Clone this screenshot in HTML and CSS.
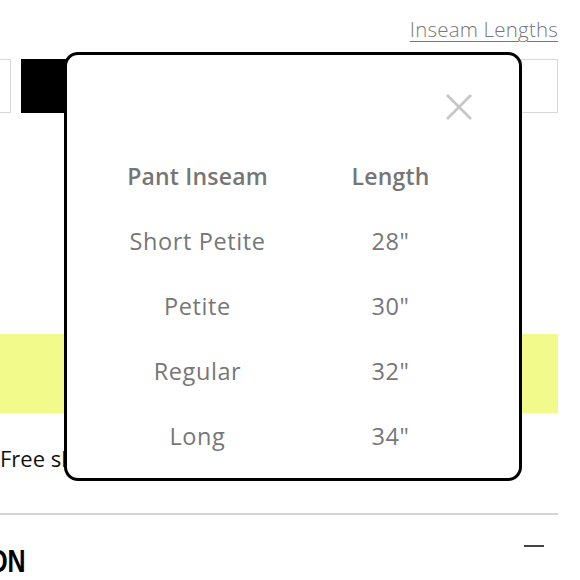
FILE: index.html
```html
<!DOCTYPE html>
<html lang="en">
<head>
<meta charset="utf-8">
<title>Inseam Lengths</title>
<link rel="stylesheet" href="styles.css">
</head>
<body>
<div class="page">
  <div class="top-row">
    <a class="inseam-link" href="#">Inseam Lengths</a>
  </div>
  <div class="sizes">
    <div class="size size-cut"></div>
    <div class="size size-active"></div>
    <div class="size"></div>
    <div class="size"></div>
    <div class="size"></div>
    <div class="size size-last"></div>
  </div>
  <div class="cta"></div>
  <p class="shipping">Free shipping on orders over $50</p>
  <div class="section-head">
    <h2 class="section-title">DESCRIPTION</h2>
    <span class="toggle"></span>
  </div>

  <div class="modal">
    <div class="modal-top">
      <button class="close" aria-label="Close">
        <svg width="26" height="26" viewBox="0 0 26 26"><path d="M1 1L25 25M25 1L1 25" stroke="#c6c6c6" stroke-width="2.6" fill="none"/></svg>
      </button>
    </div>
    <div class="table">
      <div class="cell head">Pant Inseam</div><div class="cell head">Length</div>
      <div class="cell">Short Petite</div><div class="cell">28"</div>
      <div class="cell">Petite</div><div class="cell">30"</div>
      <div class="cell">Regular</div><div class="cell">32"</div>
      <div class="cell">Long</div><div class="cell">34"</div>
    </div>
  </div>
</div>
</body>
</html>
```
FILE: styles.css
```css
* { box-sizing: border-box; }
html, body { margin: 0; padding: 0; background: #fff; overflow: hidden; }
body { font-family: "Open Sans", "Noto Sans", sans-serif; }

.page {
  position: relative;
  width: 558px;
  height: 580px;
}

.top-row {
  display: flex;
  justify-content: flex-end;
  padding-top: 14px;
  height: 59px;
}
.inseam-link {
  font-size: 20.5px;
  line-height: 30px;
  color: #777;
  text-decoration: underline;
  text-underline-offset: 4px;
  text-decoration-thickness: 1px;
  font-weight: 300;
  letter-spacing: 0.2px;
}

.sizes {
  display: flex;
  gap: 10px;
  height: 54px;
  margin-left: -50px;
}
.size {
  flex: 0 0 60px;
  border: 1px solid #d8d8d8;
  background: #fff;
}
.size-cut { flex-basis: 61px; }
.size-active { flex-basis: 90px; background: #000; border-color: #000; }
.size-last { flex: 1 1 auto; }

.cta {
  margin-top: 221px;
  height: 79px;
  background: #f2fa8c;
}

.shipping {
  margin: 30px 0 0;
  font-size: 22px;
  line-height: 30px;
  color: #111;
  white-space: nowrap;
  overflow: hidden;
}

.section-head {
  margin-top: 40px;
  border-top: 2px solid #d4d4d4;
  display: flex;
  justify-content: space-between;
  align-items: flex-start;
  padding-top: 30px;
}
.section-title {
  margin: 0 0 0 -145px;
  font-family: "Liberation Sans", Arial, sans-serif;
  font-weight: 700;
  font-size: 32px;
  line-height: 32px;
  color: #000;
  white-space: nowrap;
  transform: scaleX(0.78);
  transform-origin: left center;
}
.toggle {
  width: 20px;
  height: 2px;
  background: #444;
  margin: 0 14px 0 0;
}

.modal {
  position: absolute;
  left: 64px;
  top: 52px;
  width: 458px;
  height: 429px;
  background: #fff;
  border: 3px solid #000;
  border-radius: 14px;
  padding: 39px 47px 0 34px;
}
.modal-top {
  display: flex;
  justify-content: flex-end;
  height: 26px;
}
.close {
  border: 0;
  background: none;
  padding: 0;
  width: 26px;
  height: 26px;
  display: block;
}
.close svg { display: block; }

.table {
  margin-top: 23px;
  display: grid;
  grid-template-columns: 193px 193px;
  grid-auto-rows: 65px;
}
.cell {
  display: flex;
  align-items: center;
  justify-content: center;
  font-size: 23.5px;
  letter-spacing: 0.6px;
  color: #777;
  white-space: nowrap;
}
.cell.head { font-weight: 600; font-size: 23px; letter-spacing: 0.2px; color: #767676; }
```
